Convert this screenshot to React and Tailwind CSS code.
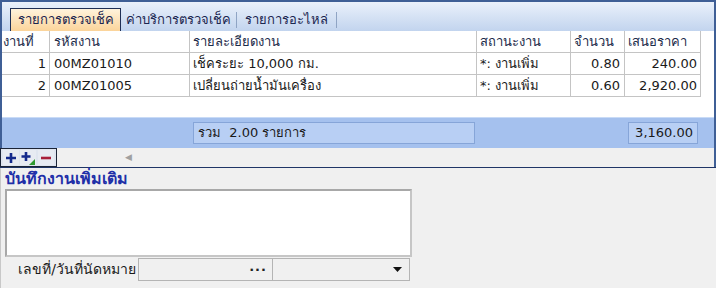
import React from 'react';

const rows = [
  { no: 1, code: '00MZ01010', detail: 'เช็คระยะ 10,000 กม.', status: '*: งานเพิ่ม', qty: '0.80', price: '240.00' },
  { no: 2, code: '00MZ01005', detail: 'เปลี่ยนถ่ายน้ำมันเครื่อง', status: '*: งานเพิ่ม', qty: '0.60', price: '2,920.00' },
];

const cols = 'grid grid-cols-[48px_140px_287px_94px_54px_76px] w-[699px]';

const App = () => {
  return (
    <div
      className="w-[716px] h-[288px] bg-[#f0f0f0] overflow-hidden text-[13px] text-[#1a1a1a]"
      style={{ fontFamily: "Tahoma, 'DejaVu Sans', 'Noto Sans', sans-serif" }}
    >
      {/* tab control */}
      <div className="h-[167px] border-l-2 border-t-2 border-r-2 border-[#3f5f96] flex flex-col">
        <div className="h-[29px] bg-gradient-to-b from-[#eaf1fb] to-[#c2d4ee] flex items-end pl-[8px] shrink-0">
          <div className="h-[23px] w-[111px] flex items-center justify-center bg-gradient-to-b from-[#fff3dc] to-[#fbd49a] border border-b-0 border-[#1f2f55] text-[#1b2650]">
            รายการตรวจเช็ค
          </div>
          <div className="h-[23px] w-[115px] flex items-center justify-center text-[#1b2650]">ค่าบริการตรวจเช็ค</div>
          <div className="h-[16px] mb-[3px] w-px bg-[#8fa4c4]"></div>
          <div className="h-[23px] w-[99px] flex items-center justify-center text-[#1b2650]">รายการอะไหล่</div>
          <div className="h-[16px] mb-[3px] w-px bg-[#8fa4c4]"></div>
        </div>

        {/* grid */}
        <div className="bg-white h-[86px] shrink-0">
          <div className={`${cols} h-[22px] border-b border-[#c4c4c4] text-[#1c2b4a]`}>
            <div className="pl-[1px] flex items-center border-r border-[#c4c4c4]">งานที่</div>
            <div className="pl-[4px] flex items-center border-r border-[#c4c4c4]">รหัสงาน</div>
            <div className="pl-[3px] flex items-center border-r border-[#c4c4c4]">รายละเอียดงาน</div>
            <div className="pl-[3px] flex items-center border-r border-[#c4c4c4]">สถานะงาน</div>
            <div className="pl-[3px] flex items-center border-r border-[#c4c4c4]">จำนวน</div>
            <div className="pl-[3px] flex items-center border-r border-[#c4c4c4]">เสนอราคา</div>
          </div>
          {rows.map((r) => (
            <div key={r.no} className={`${cols} h-[22px] border-b border-[#c4c4c4]`}>
              <div className="pr-[3px] flex items-center justify-end border-r border-[#c4c4c4]">{r.no}</div>
              <div className="pl-[4px] flex items-center border-r border-[#c4c4c4]">{r.code}</div>
              <div className="pl-[3px] flex items-center border-r border-[#c4c4c4]">{r.detail}</div>
              <div className="pl-[3px] flex items-center border-r border-[#c4c4c4]">{r.status}</div>
              <div className="pr-[4px] flex items-center justify-end border-r border-[#c4c4c4]">{r.qty}</div>
              <div className="pr-[3px] flex items-center justify-end border-r border-[#c4c4c4]">{r.price}</div>
            </div>
          ))}
        </div>

        {/* footer */}
        <div className="h-[31px] bg-[#a5c1ee] border-t border-[#c9dbf6] flex items-center shrink-0">
          <div className="ml-[191px] w-[282px] h-[22px] bg-[#b8cff4] border border-[#86a5d8] flex items-center pl-[4px]">
            รวม&nbsp;&nbsp;2.00 รายการ
          </div>
          <div className="ml-[153px] w-[70px] h-[22px] bg-[#b8cff4] border border-[#86a5d8] flex items-center justify-end pr-[4px]">
            3,160.00
          </div>
        </div>

        {/* buttons + scroller */}
        <div className="flex-1 flex items-center bg-[#f0f0f0] -ml-[2px]">
          <div className="h-[19px] w-[57px] border border-[#1b2436] bg-[#dfe5ef] flex items-center justify-around px-[1px]">
            <span className="w-[16px] h-[15px] flex items-center justify-center bg-[#e7ebf2]">
              <svg width="12" height="12" viewBox="0 0 12 12"><path d="M6 1v10M1 6h10" stroke="#142a8c" strokeWidth="2.6" /></svg>
            </span>
            <span className="w-[16px] h-[15px] flex items-center justify-center bg-[#e7ebf2]">
              <svg width="14" height="14" viewBox="0 0 14 14">
                <path d="M5 1v9M0.5 5.5h9" stroke="#142a8c" strokeWidth="2.6" />
                <path d="M8 14L14 8V14Z" fill="#2f9a2f" />
              </svg>
            </span>
            <span className="w-[16px] h-[15px] flex items-center justify-center bg-[#e7ebf2]">
              <svg width="12" height="12" viewBox="0 0 12 12"><path d="M1 6h10" stroke="#a8203a" strokeWidth="2.6" /></svg>
            </span>
          </div>
          <div className="ml-[68px] text-[#a0a0a0] text-[9px] leading-none">◀</div>
        </div>
      </div>
      <div className="h-px bg-[#1f3566]"></div>

      {/* lower panel */}
      <div className="h-[120px] border-l border-[#c8c8c8] pl-[4px] pt-[1px]">
        <div className="font-bold text-[#1f2fa8] text-[16px] leading-[19px]">บันทึกงานเพิ่มเติม</div>
        <div className="mt-[1px] w-[407px] h-[68px] bg-white border-2 border-t-[#a8a8a8] border-l-[#a8a8a8] border-r-[#c6c6c6] border-b-[#c6c6c6]"></div>
        <div className="flex items-center mt-[1px] h-[23px]">
          <div className="w-[133px] text-right pr-[2px] text-[14px]">เลขที่/วันที่นัดหมาย</div>
          <div className="w-[135px] h-[23px] border border-[#b4b4b4] bg-[#f0f0f0] flex items-center justify-end pr-[5px] font-bold text-[#222] tracking-[1px] leading-none">
            ···
          </div>
          <div className="w-[137px] h-[23px] border border-l-0 border-[#b4b4b4] bg-[#f0f0f0] flex items-center justify-end pr-[7px]">
            <svg width="9" height="5" viewBox="0 0 9 5"><path d="M0 0h9L4.5 5Z" fill="#111" /></svg>
          </div>
        </div>
      </div>
    </div>
  );
};

export default App;
